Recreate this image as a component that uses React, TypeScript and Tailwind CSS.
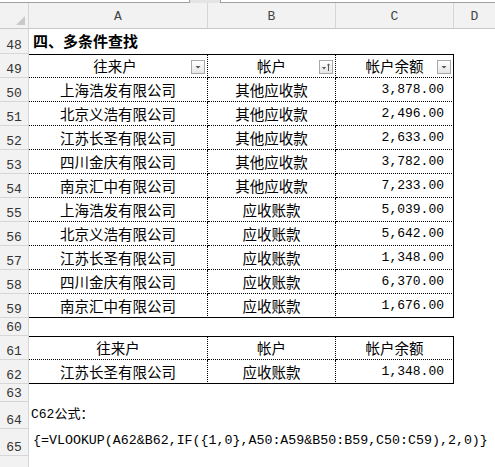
const data: [string, string, string][] = [
  ["上海浩发有限公司", "其他应收款", "3,878.00"],
  ["北京义浩有限公司", "其他应收款", "2,496.00"],
  ["江苏长圣有限公司", "其他应收款", "2,633.00"],
  ["四川金庆有限公司", "其他应收款", "3,782.00"],
  ["南京汇中有限公司", "其他应收款", "7,233.00"],
  ["上海浩发有限公司", "应收账款", "5,039.00"],
  ["北京义浩有限公司", "应收账款", "5,642.00"],
  ["江苏长圣有限公司", "应收账款", "1,348.00"],
  ["四川金庆有限公司", "应收账款", "6,370.00"],
  ["南京汇中有限公司", "应收账款", "1,676.00"],
];

const cjk = "font-['Noto_Sans_CJK_SC',sans-serif]";
const mono = "font-['Liberation_Mono','Noto_Sans_CJK_SC',monospace]";

const RowNum = ({ n }: { n: number }) => (
  <div
    className={`w-[29px] shrink-0 bg-[#f2f2f2] border-r border-b border-[#d6d6d6] flex items-end justify-center pb-[1px] text-[13px] leading-none text-[#333] ${mono}`}
  >
    {n}
  </div>
);

const FilterBtn = ({ sort }: { sort?: boolean }) => (
  <div className="absolute right-[2px] top-1/2 -translate-y-1/2 mt-[1px] w-[14px] h-[14px] border border-[#a8a8a8] bg-gradient-to-b from-white to-[#e6e6e6] flex items-center justify-center">
    {sort ? (
      <svg width="10" height="10" viewBox="0 0 10 10">
        <path d="M1 5h4l-2 2.5z" fill="#555" />
        <path d="M7.5 9V2M6.2 3.3l1.3-1.3 1.3 1.3" stroke="#555" strokeWidth="1" fill="none" />
      </svg>
    ) : (
      <svg width="8" height="6" viewBox="0 0 8 6">
        <path d="M1.5 2h5l-2.5 2.5z" fill="#555" />
      </svg>
    )}
  </div>
);

type CellProps = {
  w: string;
  first?: boolean;
  last?: boolean;
  right?: boolean;
  className?: string;
  children?: React.ReactNode;
};

const Cell = ({ w, first, last, right, className, children }: CellProps) => (
  <div
    className={`${w} relative shrink-0 border-r border-b border-black border-dotted flex items-center ${
      first ? "border-t [border-top-style:solid]" : ""
    } ${last ? "[border-bottom-style:solid]" : ""} ${right ? "[border-right-style:solid]" : ""} ${className ?? ""}`}
  >
    {children}
  </div>
);

const TableRow = ({
  n,
  a,
  b,
  c,
  first,
  last,
  head,
  filters,
}: {
  n: number;
  a: string;
  b: string;
  c: string;
  first?: boolean;
  last?: boolean;
  head?: boolean;
  filters?: boolean;
}) => (
  <div className="flex h-[24px]">
    <RowNum n={n} />
    <Cell w="w-[179px]" first={first} last={last} className={`justify-center ${cjk} text-[14.5px]`}>
      <span className={head && filters ? "-ml-[6px]" : ""}>{a}</span>
      {filters && <FilterBtn />}
    </Cell>
    <Cell w="w-[128px]" first={first} last={last} className={`justify-center ${cjk} text-[14.5px]`}>
      {b}
      {filters && <FilterBtn sort />}
    </Cell>
    <Cell
      w="w-[118px]"
      first={first}
      last={last}
      right
      className={head ? `justify-center ${cjk} text-[14.5px]` : `justify-end pr-[9px] ${mono} text-[13px]`}
    >
      {c}
      {filters && <FilterBtn />}
    </Cell>
  </div>
);

const Blank = ({ n, h }: { n: number; h: string }) => (
  <div className={`flex ${h}`}>
    <RowNum n={n} />
  </div>
);

export default function App() {
  return (
    <div className="w-[495px] h-[467px] overflow-hidden bg-white text-black">
      {/* top strip */}
      <div className="flex h-[3px] bg-[#e4e4e4]">
        <div className="w-[190px] bg-white border-r border-b border-[#a0a0a0]" />
        <div className="w-[30px]" />
        <div className="flex-1 bg-white border-l border-b border-[#a0a0a0]" />
      </div>

      {/* column header */}
      <div className={`flex h-[26px] bg-[#f2f2f2] border-b border-[#c8c8c8] text-[13px] text-[#444] ${mono}`}>
        <div className="w-[29px] shrink-0 border-r border-[#d6d6d6] flex items-end justify-end p-[3px]">
          <svg width="9" height="9" viewBox="0 0 9 9">
            <path d="M9 0v9H0z" fill="#c9c9c9" />
          </svg>
        </div>
        <div className="w-[179px] shrink-0 border-r border-[#d6d6d6] flex items-end justify-center pb-[2px]">A</div>
        <div className="w-[128px] shrink-0 border-r border-[#d6d6d6] flex items-end justify-center pb-[2px]">B</div>
        <div className="w-[118px] shrink-0 border-r border-[#d6d6d6] flex items-end justify-center pb-[2px]">C</div>
        <div className="flex-1 flex items-end justify-center pb-[2px]">D</div>
      </div>

      {/* row 48 */}
      <div className="flex h-[25px]">
        <RowNum n={48} />
        <div className={`flex items-center pl-[4px] font-bold text-[15px] ${cjk}`}>四、多条件查找</div>
      </div>

      <TableRow n={49} a="往来户" b="帐户" c="帐户余额" first head filters />
      {data.map((r, i) => (
        <TableRow key={i} n={50 + i} a={r[0]} b={r[1]} c={r[2]} last={i === data.length - 1} />
      ))}

      <Blank n={60} h="h-[18px]" />

      <TableRow n={61} a="往来户" b="帐户" c="帐户余额" first head />
      <TableRow n={62} a="江苏长圣有限公司" b="应收账款" c="1,348.00" last />

      <Blank n={63} h="h-[18px]" />

      <div className="flex h-[27px]">
        <RowNum n={64} />
        <div className={`flex items-end pb-[5px] pl-[2px] text-[13px] ${mono}`}>C62公式：</div>
      </div>
      <div className="flex h-[27px]">
        <RowNum n={65} />
        <div className={`flex items-end pb-[5px] pl-[4px] text-[13.3px] whitespace-nowrap ${mono}`}>
          {"{=VLOOKUP(A62&B62,IF({1,0},A50:A59&B50:B59,C50:C59),2,0)}"}
        </div>
      </div>
      <Blank n={66} h="h-[27px]" />
    </div>
  );
}
